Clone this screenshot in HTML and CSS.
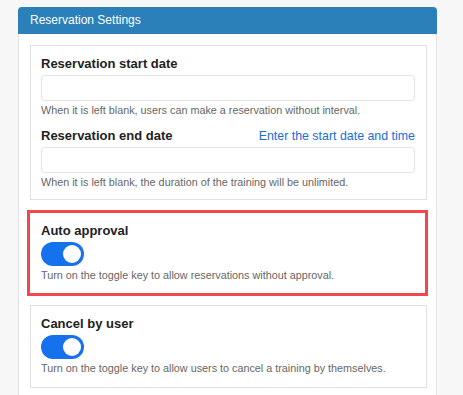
FILE: index.html
```html
<!DOCTYPE html>
<html lang="en">
<head>
<meta charset="utf-8">
<title>Reservation Settings</title>
<link rel="stylesheet" href="styles.css">
</head>
<body>
<section class="card">
  <header class="card-head">Reservation Settings</header>
  <div class="card-body">
    <div class="panel">
      <div class="field">
        <div class="label-row"><label class="label">Reservation start date</label></div>
        <input class="input" type="text">
        <p class="hint">When it is left blank, users can make a reservation without interval.</p>
      </div>
      <div class="field">
        <div class="label-row"><label class="label">Reservation end date</label><a class="link" href="#">Enter the start date and time</a></div>
        <input class="input" type="text">
        <p class="hint">When it is left blank, the duration of the training will be unlimited.</p>
      </div>
    </div>
    <div class="panel panel-toggle panel-highlight">
      <div class="label-row"><label class="label">Auto approval</label></div>
      <span class="toggle"><span class="knob"></span></span>
      <p class="hint">Turn on the toggle key to allow reservations without approval.</p>
    </div>
    <div class="panel panel-toggle panel-last">
      <div class="label-row"><label class="label">Cancel by user</label></div>
      <span class="toggle"><span class="knob"></span></span>
      <p class="hint">Turn on the toggle key to allow users to cancel a training by themselves.</p>
    </div>
  </div>
</section>
</body>
</html>
```

FILE: styles.css
```css
* { box-sizing: border-box; }
html, body { margin: 0; padding: 0; }
body {
  background: #f7f7f7;
  font-family: "Liberation Sans", Arial, sans-serif;
  padding: 7px 0 0 18px;
  overflow: hidden;
}
.card {
  width: 419px;
  background: #fff;
  border: 1px solid #e4e4e4;
  border-top: none;
  border-radius: 4px 4px 0 0;
}
.card-head {
  background: #2b80ba;
  color: #fff;
  font-size: 12px;
  height: 27px;
  line-height: 27px;
  padding-left: 12px;
  margin: 0 -1px;
  border-radius: 4px 4px 0 0;
}
.card-body {
  padding: 11px 9px 40px 11px;
  display: flex;
  flex-direction: column;
}
.panel {
  border: 1px solid #e0e0e0;
  padding: 9px 11px 9px 10px;
  display: flex;
  flex-direction: column;
}
.field { display: flex; flex-direction: column; }
.field + .field { margin-top: 9px; }
.label-row {
  display: flex;
  justify-content: space-between;
  align-items: center;
  height: 18px;
  margin-bottom: 2px;
}
.label {
  font-weight: bold;
  font-size: 13px;
  color: #222;
  line-height: 18px;
}
.link {
  color: #1a6ddb;
  font-size: 12.4px;
  text-decoration: none;
  line-height: 18px;
}
.input {
  display: block;
  width: 100%;
  height: 26px;
  border: 1px solid #e2e2e2;
  border-radius: 4px;
  background: #fff;
  margin: 0;
  padding: 0 8px;
}
.hint {
  margin: 1px 0 0;
  font-size: 10.8px;
  line-height: 16px;
  color: #666;
}
.panel-toggle { padding: 9px 11px 11px 10px; }
.panel-toggle .label-row { margin-bottom: 0; }
.panel-toggle .hint { margin-top: 0; }
.panel-highlight {
  margin: 10px -1px 0 -3px;
  border: 3px solid #f5474b;
  padding: 9px 10px 10px 11px;
}
.panel-last { margin-top: 9px; }
.toggle {
  display: flex;
  justify-content: flex-end;
  align-items: center;
  width: 43px;
  height: 24px;
  border-radius: 12px;
  background: #1672ec;
  padding-right: 3px;
  margin: 2px 0 1px;
}
.knob {
  width: 18px;
  height: 18px;
  border-radius: 50%;
  background: #fff;
}
```
